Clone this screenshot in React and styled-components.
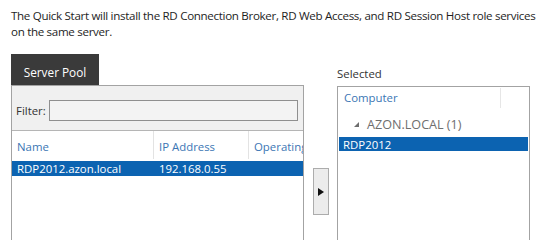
import React from 'react';
import styled, { createGlobalStyle } from 'styled-components';

const GlobalStyle = createGlobalStyle`
  html, body {
    margin: 0;
    padding: 0;
    background: #ffffff;
  }
  body {
    font-family: "Open Sans", "Noto Sans", sans-serif;
    font-size: 12px;
    color: #1e1e1e;
  }
`;

const Page = styled.div`
  width: 537px;
  height: 240px;
  overflow: hidden;
  padding: 8px 7px 0 11px;
  box-sizing: border-box;
`;

const Intro = styled.p`
  margin: 0;
  font-size: 11.6px;
  line-height: 16px;
  letter-spacing: -0.32px;
  white-space: nowrap;
  color: #1e1e1e;
`;

const Columns = styled.div`
  display: flex;
  margin-top: 14px;
`;

const LeftColumn = styled.div`
  width: 293px;
  display: flex;
  flex-direction: column;
`;

const Tab = styled.div`
  width: 88px;
  height: 31px;
  background: #3a3a3a;
  color: #ffffff;
  font-size: 11.8px;
  display: flex;
  align-items: center;
  justify-content: center;
  padding-top: 4px;
  box-sizing: border-box;
`;

const Pool = styled.div`
  border: 1px solid #a3a3a3;
  border-bottom: none;
  background: #f0f0f0;
  height: 160px;
  display: flex;
  flex-direction: column;
`;

const FilterRow = styled.div`
  display: flex;
  align-items: center;
  gap: 3px;
  padding: 14px 5px 9px 4px;
  font-size: 11.4px;
  color: #333;
`;

const FilterInput = styled.div`
  flex: 1;
  height: 19px;
  border: 1px solid #8f8f8f;
  background: #f3f3f3;
`;

const List = styled.div`
  flex: 1;
  background: #ffffff;
  border-top: 1px solid #b5b5b5;
`;

const HeaderRow = styled.div`
  display: grid;
  grid-template-columns: ${({ $cols }) => $cols};
  height: 28px;
`;

const HeaderCell = styled.div`
  color: #3b76b4;
  font-size: 11.4px;
  padding: 2px 0 0 5px;
  display: flex;
  align-items: center;
  white-space: nowrap;
  overflow: hidden;
  border-left: ${({ $sep }) => ($sep ? '1px solid #e3e3e3' : 'none')};
`;

const Row = styled.div`
  display: grid;
  grid-template-columns: ${({ $cols }) => $cols};
  height: ${({ $h }) => $h}px;
  margin-top: ${({ $mt }) => $mt || 0}px;
  background: ${({ $selected }) => ($selected ? '#0c63b1' : 'transparent')};
  color: ${({ $selected }) => ($selected ? '#ffffff' : '#1e1e1e')};
  font-size: 11.4px;
  align-items: center;
`;

const Cell = styled.div`
  padding-left: ${({ $pl }) => $pl}px;
  white-space: nowrap;
  overflow: hidden;
`;

const MiddleColumn = styled.div`
  width: 33px;
  padding: 114px 0 0 9px;
  box-sizing: border-box;
`;

const MoveButton = styled.button`
  width: 16px;
  height: 47px;
  padding: 0;
  border: 1px solid #acacac;
  background: #ececec;
  display: flex;
  align-items: center;
  justify-content: center;
  cursor: pointer;
`;

const RightColumn = styled.div`
  width: 193px;
  display: flex;
  flex-direction: column;
`;

const Label = styled.div`
  font-size: 11.4px;
  color: #333;
  height: 32px;
  display: flex;
  align-items: flex-end;
  padding-bottom: 5px;
  box-sizing: border-box;
`;

const SelectedBox = styled.div`
  border: 1px solid #a3a3a3;
  border-bottom: none;
  background: #ffffff;
  height: 160px;
  padding: 0 1px;
`;

const BoxHeader = styled.div`
  display: grid;
  grid-template-columns: 162px 1fr;
  height: 14px;
  padding-top: 1px;
`;

const BoxHeaderCell = styled.div`
  color: #3b76b4;
  font-size: 11.4px;
  padding-left: 5px;
  line-height: 20px;
  border-right: ${({ $sep }) => ($sep ? '1px solid #e6e6e6' : 'none')};
`;

const GroupRow = styled.div`
  display: flex;
  align-items: center;
  gap: 8px;
  margin-top: 14px;
  padding-left: 15px;
  height: 16px;
  color: #6e6e6e;
  font-size: 12.6px;
`;

const Arrow = () => (
  <svg width="7" height="8" viewBox="0 0 7 8">
    <path d="M0 0 L6 4 L0 8 Z" fill="#111" />
  </svg>
);

const Expand = () => (
  <svg width="5" height="5" viewBox="0 0 5 5">
    <path d="M5 0 L5 5 L0 5 Z" fill="#6e6e6e" />
  </svg>
);

const poolCols = '141px 95px 1fr';

export default function App() {
  return (
    <>
      <GlobalStyle />
      <Page>
        <Intro>
          The Quick Start will install the RD Connection Broker, RD Web Access, and RD Session Host role services
          <br />
          on the same server.
        </Intro>
        <Columns>
          <LeftColumn>
            <Tab>Server Pool</Tab>
            <Pool>
              <FilterRow>
                Filter:
                <FilterInput />
              </FilterRow>
              <List>
                <HeaderRow $cols={poolCols}>
                  <HeaderCell>Name</HeaderCell>
                  <HeaderCell $sep>IP Address</HeaderCell>
                  <HeaderCell $sep>Operating</HeaderCell>
                </HeaderRow>
                <Row $cols={poolCols} $h={15} $mt={2} $selected>
                  <Cell $pl={5}>RDP2012.azon.local</Cell>
                  <Cell $pl={6}>192.168.0.55</Cell>
                  <Cell $pl={6} />
                </Row>
              </List>
            </Pool>
          </LeftColumn>
          <MiddleColumn>
            <MoveButton aria-label="Add">
              <Arrow />
            </MoveButton>
          </MiddleColumn>
          <RightColumn>
            <Label>Selected</Label>
            <SelectedBox>
              <BoxHeader>
                <BoxHeaderCell $sep>Computer</BoxHeaderCell>
                <BoxHeaderCell />
              </BoxHeader>
              <GroupRow>
                <Expand />
                AZON.LOCAL (1)
              </GroupRow>
              <Row $cols="1fr" $h={14} $mt={5} $selected>
                <Cell $pl={4}>RDP2012</Cell>
              </Row>
            </SelectedBox>
          </RightColumn>
        </Columns>
      </Page>
    </>
  );
}
